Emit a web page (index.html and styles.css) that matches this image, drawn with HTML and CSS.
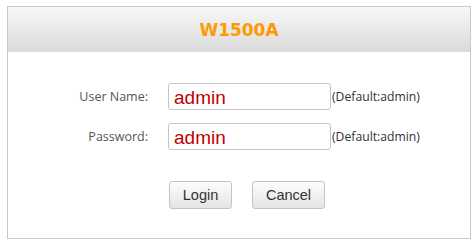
FILE: index.html
```html
<!DOCTYPE html><html>
<head><title>W1500A</title>
	<link rel="stylesheet" href="styles.css">
</head><body>
<div class="box">
	<div class="head">W1500A</div>
	<form class="login" method="post" action="/">
		<div class="row">
			<label class="lbl">User Name:</label>
			<input type="text" name="username" value="admin">
			<span class="hint">(Default:admin)</span>
		</div>
		<div class="row">
			<label class="lbl">Password:</label>
			<input type="text" name="password" value="admin">
			<span class="hint">(Default:admin)</span>
		</div>
		<div class="btns">
			<button type="submit" class="btn login-btn">Login</button>
			<button type="reset" class="btn cancel-btn">Cancel</button>
		</div>
	</form>
</div>
</body></html>
```

FILE: styles.css
```css
html,body{margin:0;padding:0;background:#fff;}
body{padding:6px 0 0 7px;font-family:"Open Sans",sans-serif;}
.box{width:462px;height:231px;border:1px solid #c8c8c8;box-sizing:content-box;}
.head{
	height:45px;
	line-height:47px;
	text-align:center;
	background:linear-gradient(#f8f8f8,#dadada);
	color:#ff9900;
	font-family:"DejaVu Sans",sans-serif;
	font-weight:bold;
	font-size:17px;
}
.login{padding:31px 0 0 0;margin:0;}
.row{display:flex;align-items:center;margin-bottom:13px;}
.lbl{width:140px;text-align:right;font-size:12.5px;color:#555;padding-right:20px;}
.row input{
	width:163px;
	height:27px;
	box-sizing:border-box;
	border:1px solid #c6c6c6;
	border-radius:3px;
	padding:2px 4px 0 5px;
	font-family:"Liberation Sans",Arial,sans-serif;
	font-size:19px;
	color:#c00000;
	margin:0;
	outline:none;
}
.hint{font-size:12.2px;color:#333;padding-left:1px;}
.btns{display:flex;gap:20px;padding:18px 0 0 161px;}
.btn{
	height:28px;
	border:1px solid #c4c4c4;
	border-radius:3px;
	background:linear-gradient(#fdfdfd,#e4e4e4);
	font-family:"Liberation Sans",Arial,sans-serif;
	font-size:14.5px;
	color:#333;
	cursor:pointer;
	padding:0;
}
.login-btn{width:63px;}
.cancel-btn{width:73px;}
```
